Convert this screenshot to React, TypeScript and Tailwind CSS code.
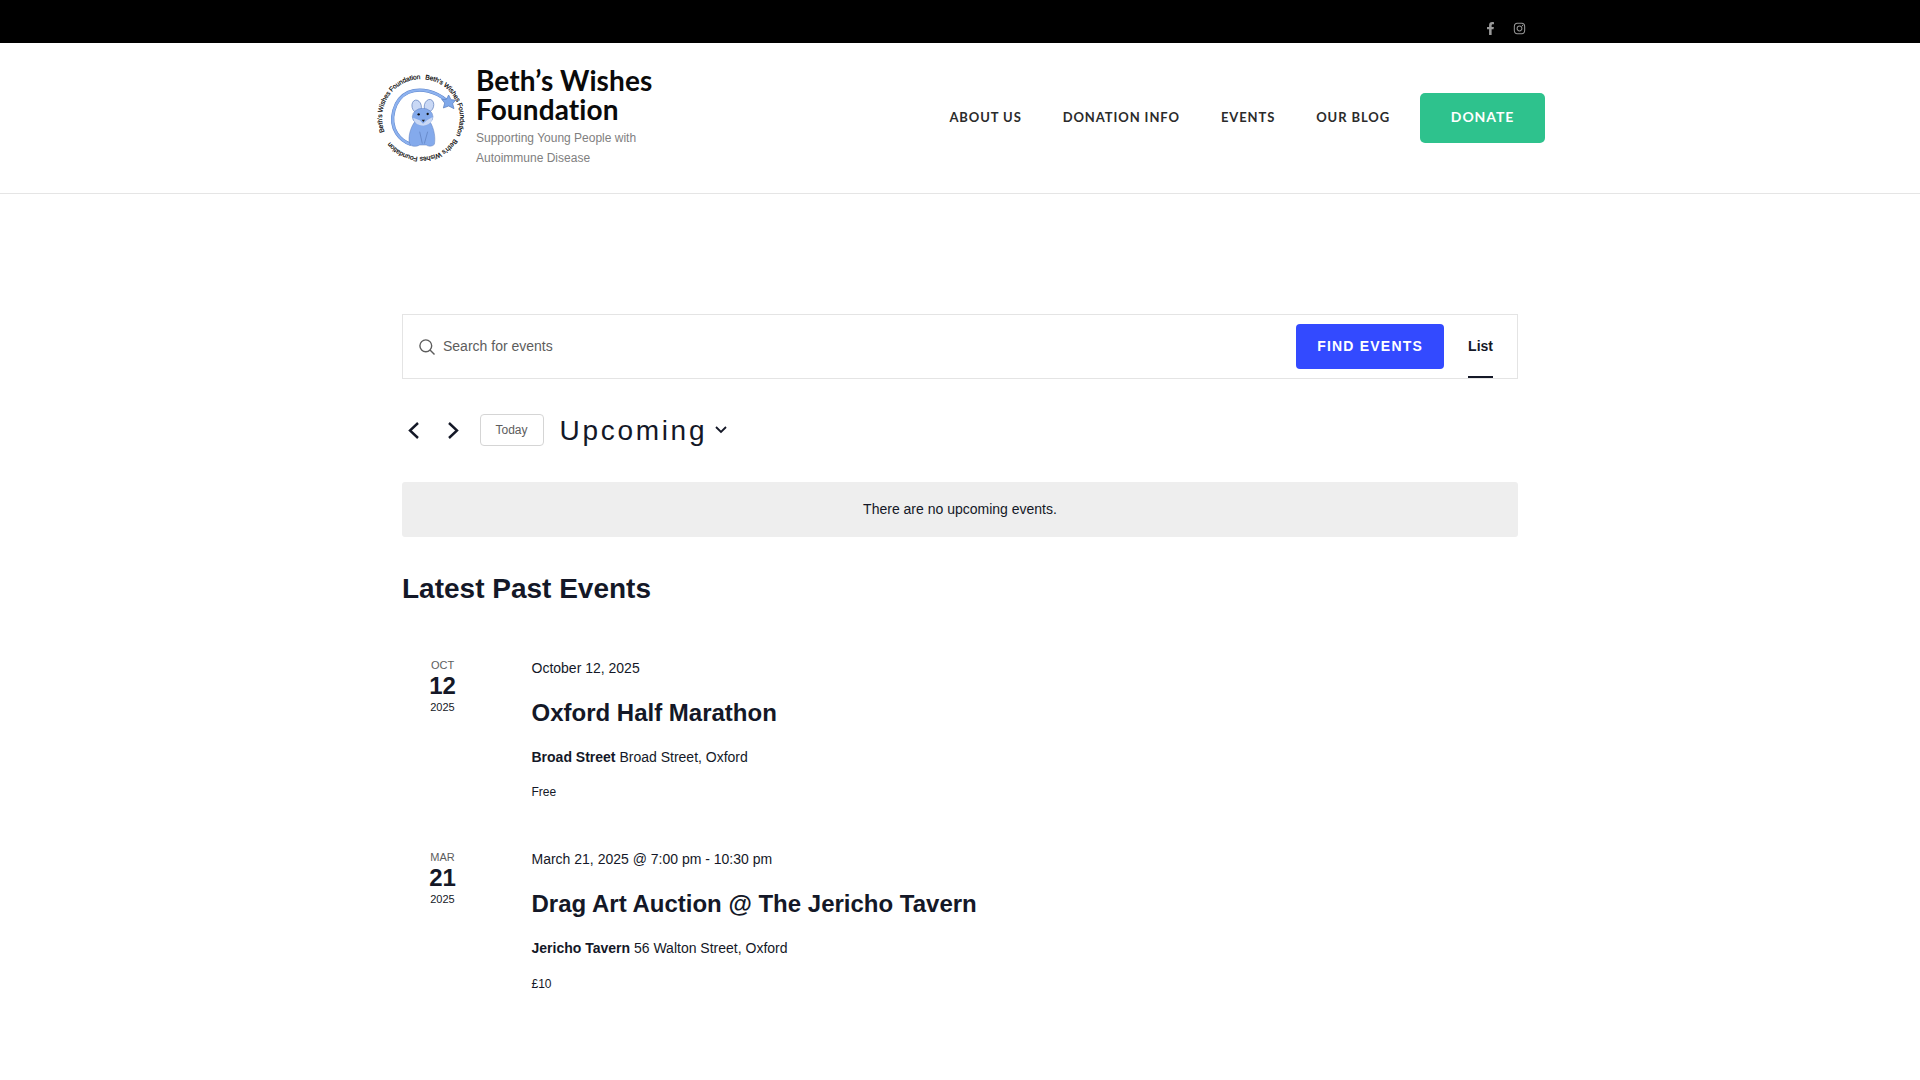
import { FaFacebookF, FaInstagram } from "react-icons/fa";

const navLinks = ["ABOUT US", "DONATION INFO", "EVENTS", "OUR BLOG"];

const events = [
  {
    month: "OCT",
    day: "12",
    year: "2025",
    date: "October 12, 2025",
    title: "Oxford Half Marathon",
    venue: "Broad Street",
    address: "Broad Street, Oxford",
    cost: "Free",
  },
  {
    month: "MAR",
    day: "21",
    year: "2025",
    date: "March 21, 2025 @ 7:00 pm - 10:30 pm",
    title: "Drag Art Auction @ The Jericho Tavern",
    venue: "Jericho Tavern",
    address: "56 Walton Street, Oxford",
    cost: "£10",
  },
];

function Logo() {
  const arc = "M226 106 C195 80 150 66 112 82 C68 102 52 165 77 205 C88 222 102 232 120 238";
  return (
    <svg viewBox="15 24 270 270" className="h-[90px] w-[90px] shrink-0">
      <defs>
        <path id="ring" d="M150 42 A117 117 0 1 1 149.9 42" fill="none" />
      </defs>
      {[249, 6, 122].map((angle) => (
        <g key={angle} transform={`rotate(${angle} 150 159)`}>
          <text fontSize="20" fill="#000" stroke="#000" strokeWidth="0.5" fontFamily="'Liberation Sans', sans-serif">
            <textPath href="#ring" textLength="225">
              Beth’s Wishes Foundation
            </textPath>
          </text>
        </g>
      ))}
      <path d={arc} fill="none" stroke="#5f86cc" strokeWidth="10" />
      <path d={arc} fill="none" stroke="#8db2ef" strokeWidth="7" />
      <path
        d="M233 90 L240 104 L254 105 L245 116 L249 131 L233 123 L217 129 L221 114 L212 103 L226 103 Z"
        fill="#7fa8ea"
        stroke="#5578bb"
        strokeWidth="2"
      />
      <ellipse cx="137" cy="124" rx="14" ry="19" fill="#c9d8f5" stroke="#5f7fbd" strokeWidth="2" transform="rotate(-12 137 124)" />
      <ellipse cx="174" cy="122" rx="14" ry="19" fill="#c9d8f5" stroke="#5f7fbd" strokeWidth="2" transform="rotate(14 174 122)" />
      <path
        d="M130 172 C114 195 110 228 118 240 C126 246 140 244 146 240 L166 240 C172 245 184 245 190 238 C194 220 190 192 178 172 Z"
        fill="#84aaec"
        stroke="#5f7fbd"
        strokeWidth="1.5"
      />
      <ellipse cx="155" cy="155" rx="31" ry="25" fill="#84aaec" stroke="#5f7fbd" strokeWidth="1.5" />
      <path d="M126 158 L146 166 L156 176 L168 166 L185 156 C184 172 174 180 157 182 C140 181 130 174 126 158 Z" fill="#c9d8f5" />
      <circle cx="143" cy="148" r="3.5" fill="#111" />
      <circle cx="170" cy="147" r="3.5" fill="#111" />
      <path d="M152 164 L162 164 L157 171 Z" fill="#222" />
      <path d="M146 200 L154 236 M170 200 L160 236" fill="none" stroke="#4d6cab" strokeWidth="1.5" />
    </svg>
  );
}

function Chevron({ direction }: { direction: "left" | "right" }) {
  return (
    <svg viewBox="0 0 11 17" className="h-[17px] w-[11px]">
      <path
        d={direction === "left" ? "M10 1 L2 8.5 L10 16" : "M1 1 L9 8.5 L1 16"}
        fill="none"
        stroke="#141827"
        strokeWidth="2.4"
      />
    </svg>
  );
}

function EventRow({ event }: { event: (typeof events)[number] }) {
  return (
    <div className="flex h-[191.5px]">
      <div className="flex w-[81px] shrink-0 flex-col items-center pt-[6px] text-[#141827]">
        <span className="text-[11px] leading-[16px] text-[#5d5d5d]">{event.month}</span>
        <span className="text-[24px] leading-[26px] font-bold">{event.day}</span>
        <span className="text-[11px] leading-[16px]">{event.year}</span>
      </div>
      <div className="ml-[48.5px] text-[#141827]">
        <p className="pt-[6.5px] text-[14px] leading-[20px]">{event.date}</p>
        <h3 className="mt-[17px] text-[24px] leading-[36px] font-bold">{event.title}</h3>
        <p className="mt-[16px] text-[14px] leading-[20px]">
          <span className="font-bold">{event.venue}</span> {event.address}
        </p>
        <p className="mt-[16.5px] text-[12px] leading-[18px]">{event.cost}</p>
      </div>
    </div>
  );
}

export default function App() {
  return (
    <div className="min-h-[1080px] bg-white font-['Liberation_Sans',sans-serif]">
      <div className="flex h-[43px] items-start gap-[16px] bg-black pt-[22px] pl-[1483.5px] text-[#999999]">
        <FaFacebookF className="h-[13px] w-[13px]" />
        <FaInstagram className="h-[13px] w-[13px]" />
      </div>

      <header className="h-[151px] border-b border-[#e5e5e5]">
        <div className="ml-[376px] flex h-[150px] w-[1169px] items-center">
          <Logo />
          <div className="ml-[10px] w-[190px] pb-[2px]">
            <div className="font-['Lato',sans-serif] text-[28px] leading-[29px] font-bold tracking-[0.1px] text-[#0a0a0a]">
              Beth’s Wishes Foundation
            </div>
            <p className="mt-[4px] text-[12px] leading-[20px] text-[#808080]">
              Supporting Young People with Autoimmune Disease
            </p>
          </div>
          <nav className="ml-auto flex items-center gap-[41px] font-['Lato',sans-serif] text-[13px] font-bold tracking-[0.9px] text-[#2b2b2b]">
            {navLinks.map((link) => (
              <a key={link}>{link}</a>
            ))}
          </nav>
          <a className="ml-[30px] flex h-[50px] w-[125px] items-center justify-center rounded-[5px] bg-[#2ec28d] pb-[4px] font-['Lato',sans-serif] text-[14px] font-bold tracking-[0.9px] text-white">
            DONATE
          </a>
        </div>
      </header>

      <main className="mx-auto w-[1116px] pt-[120px]">
        <div className="flex h-[65px] items-center border border-[#e4e4e4] pl-[16px]">
          <svg viewBox="0 0 16 16" className="h-[16px] w-[16px]">
            <circle cx="6.8" cy="6.8" r="5.9" fill="none" stroke="#5d5d5d" strokeWidth="1.4" />
            <path d="M11 11 L15.5 15.5" fill="none" stroke="#5d5d5d" strokeWidth="1.4" />
          </svg>
          <span className="ml-[8px] text-[14px] text-[#5d5d5d]">Search for events</span>
          <button className="ml-auto h-[45px] w-[148px] rounded-[4px] bg-[#334aff] text-[14px] font-bold tracking-[1.2px] text-white">
            FIND EVENTS
          </button>
          <div className="relative mr-[24px] ml-[24px] flex h-full items-center text-[14px] font-bold text-[#141827]">
            List
            <span className="absolute right-0 bottom-0 left-0 h-[2px] bg-[#141827]" />
          </div>
        </div>

        <div className="mt-[35px] flex h-[32px] items-center pl-[6px]">
          <Chevron direction="left" />
          <span className="ml-[29px]">
            <Chevron direction="right" />
          </span>
          <button className="ml-[20.5px] h-[32px] w-[64px] rounded-[4px] border border-[#d5d5d5] text-[12px] text-[#5d5d5d]">
            Today
          </button>
          <span className="ml-[16px] pt-[2px] text-[28px] tracking-[2.7px] text-[#141827]">Upcoming</span>
          <svg viewBox="0 0 12 8" className="ml-[8px] h-[8px] w-[12px]">
            <path d="M1 1 L6 6 L11 1" fill="none" stroke="#141827" strokeWidth="1.8" />
          </svg>
        </div>

        <div className="mt-[36px] flex h-[55px] items-center justify-center rounded-[3px] bg-[#eeeeee] text-[14px] text-[#141827]">
          There are no upcoming events.
        </div>

        <h2 className="mt-[34px] text-[28px] leading-[36px] font-bold text-[#141827]">Latest Past Events</h2>

        <div className="mt-[44px]">
          {events.map((event) => (
            <EventRow key={event.title} event={event} />
          ))}
        </div>
      </main>
    </div>
  );
}
